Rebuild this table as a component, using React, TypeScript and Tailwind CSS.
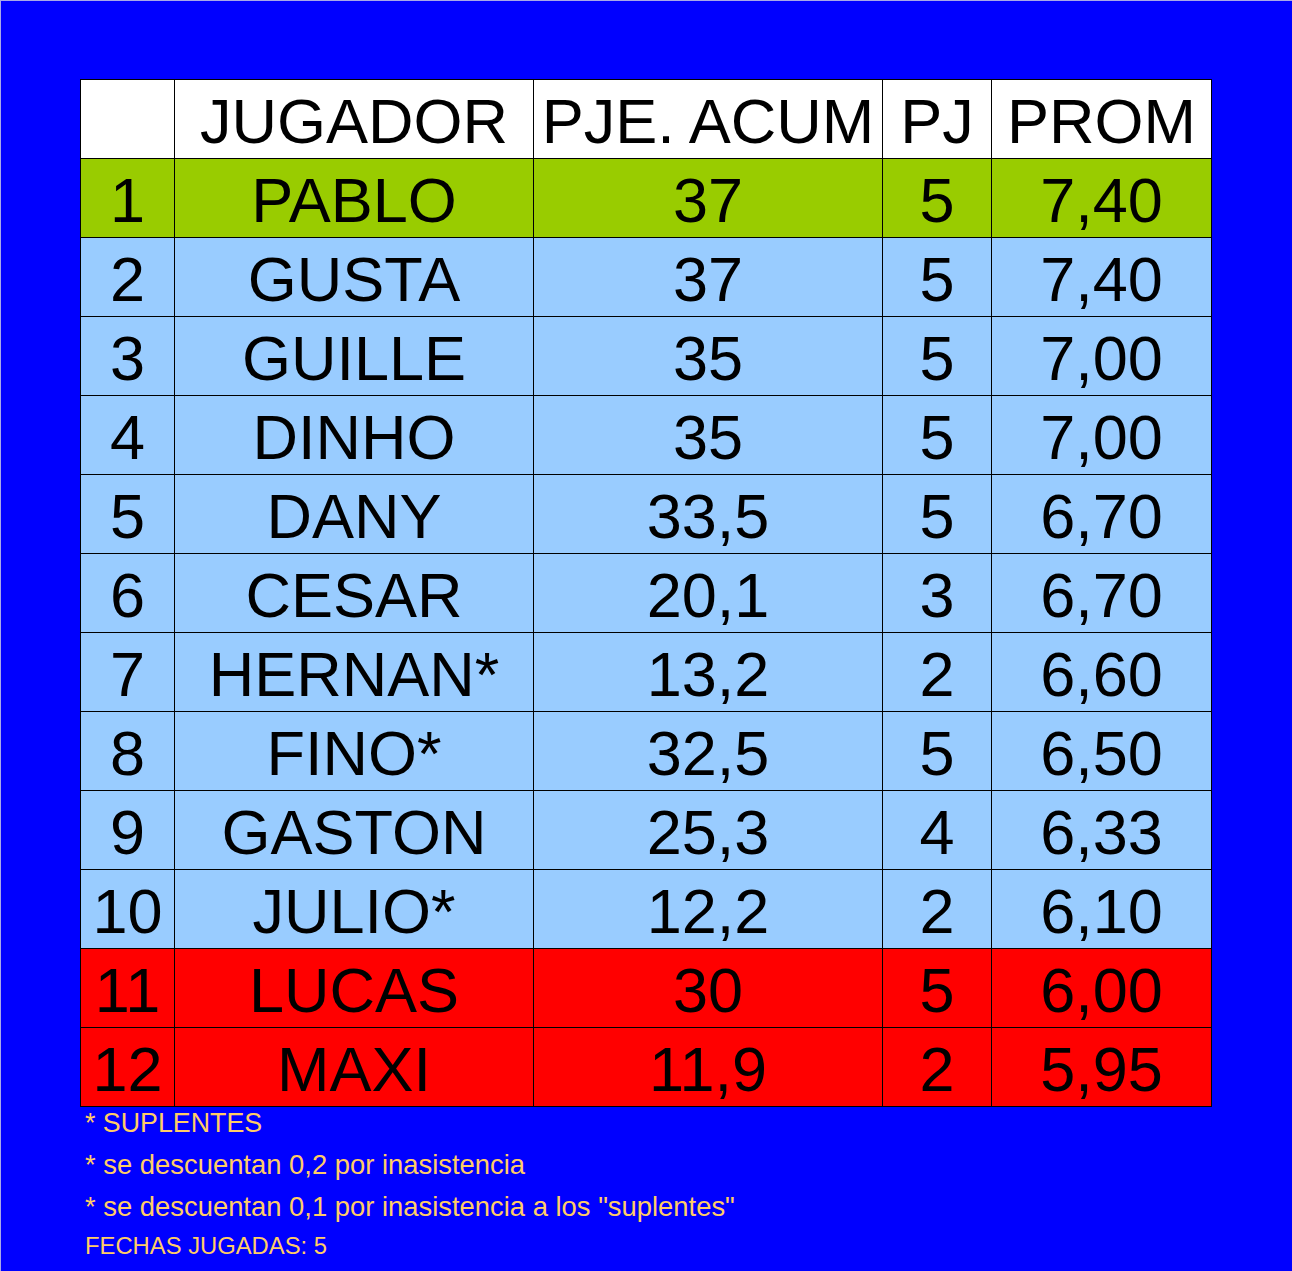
const HEADERS = ["", "JUGADOR", "PJE. ACUM", "PJ", "PROM"];

type Row = [string, string, string, string, string];

const ROWS: Row[] = [
  ["1", "PABLO", "37", "5", "7,40"],
  ["2", "GUSTA", "37", "5", "7,40"],
  ["3", "GUILLE", "35", "5", "7,00"],
  ["4", "DINHO", "35", "5", "7,00"],
  ["5", "DANY", "33,5", "5", "6,70"],
  ["6", "CESAR", "20,1", "3", "6,70"],
  ["7", "HERNAN*", "13,2", "2", "6,60"],
  ["8", "FINO*", "32,5", "5", "6,50"],
  ["9", "GASTON", "25,3", "4", "6,33"],
  ["10", "JULIO*", "12,2", "2", "6,10"],
  ["11", "LUCAS", "30", "5", "6,00"],
  ["12", "MAXI", "11,9", "2", "5,95"],
];

function rowBg(index: number) {
  if (index === 0) return "bg-[#99cc00]";
  if (index >= 10) return "bg-[#ff0000]";
  return "bg-[#99ccff]";
}

function Cell({ text, bg }: { text: string; bg: string }) {
  return (
    <div
      className={`${bg} flex h-[78px] items-center justify-center overflow-hidden whitespace-nowrap pt-[4px] text-[63px] leading-[78px] text-black`}
    >
      {text}
    </div>
  );
}

export default function App() {
  return (
    <div
      className="h-[1271px] w-[1292px] border-l border-t border-[#a8a8e8] bg-[#0000ff] pl-[79px] pt-[78px]"
      style={{ fontFamily: '"Liberation Sans", Arial, sans-serif' }}
    >
      <div className="grid w-[1132px] grid-cols-[93px_358px_348px_108px_219px] gap-px border border-black bg-black">
        {HEADERS.map((h, i) => (
          <Cell key={`h${i}`} text={h} bg="bg-white" />
        ))}
        {ROWS.map((row, r) =>
          row.map((value, c) => <Cell key={`${r}-${c}`} text={value} bg={rowBg(r)} />),
        )}
      </div>

      <div className="-mt-[5px] flex flex-col whitespace-nowrap pl-[5px] text-[#ffcc66]">
        <div className="text-[26.8px] leading-[42px]">* SUPLENTES</div>
        <div className="text-[27.4px] leading-[42px]">* se descuentan 0,2 por inasistencia</div>
        <div className="text-[27.4px] leading-[42px]">
          * se descuentan 0,1 por inasistencia a los "suplentes"
        </div>
        <div className="text-[23.8px] leading-[36px]">FECHAS JUGADAS: 5</div>
      </div>
    </div>
  );
}
